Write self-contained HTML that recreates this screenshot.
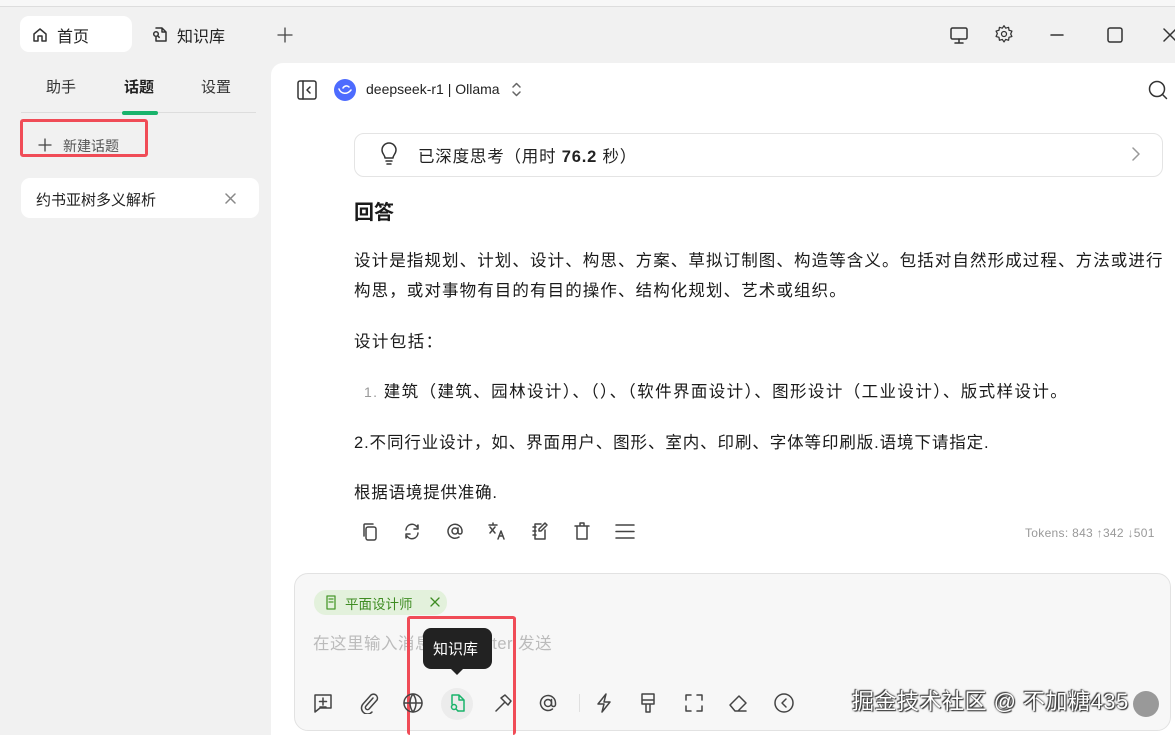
<!DOCTYPE html>
<html><head><meta charset="utf-8"><style>
*{margin:0;padding:0;box-sizing:border-box}
body{width:1175px;height:735px;overflow:hidden;background:#f1f1f1;font-family:"Liberation Sans","Noto Sans CJK SC",sans-serif;color:#222;position:relative}
.abs{position:absolute}
svg{position:absolute;fill:none;stroke:#333;stroke-width:1.5;stroke-linecap:round;stroke-linejoin:round}
.t{font-size:16.5px;letter-spacing:1.4px;color:#1a1a1a;left:354px;white-space:nowrap}
.ic svg{stroke:#444}
</style></head><body>
<div class="abs" style="left:0;top:0;width:1175px;height:7px;background:#f7f7f7;border-bottom:1px solid #ddd"></div>
<div class="abs" style="left:20px;top:16px;width:112px;height:36px;background:#fff;border-radius:9px"></div>
<svg style="left:32px;top:27px" width="16" height="16" viewBox="0 0 16 16"><path d="M2 7L8 2l6 5v7H10V9H6v5H2z"/></svg>
<div class="abs" style="left:57px;top:23px;font-size:16px">首页</div>
<svg style="left:152px;top:26px" width="16" height="17" viewBox="0 0 16 17"><path d="M4 2h6l4 4v9H4V11M10 2v4h4"/><circle cx="4" cy="8" r="2.3"/><path d="M5.7 9.8l1.5 1.5"/></svg>
<div class="abs" style="left:177px;top:23px;font-size:16px">知识库</div>
<svg style="left:277px;top:27px" width="16" height="16" viewBox="0 0 16 16"><path d="M8 1v14M1 8h14" stroke="#444" stroke-width="1.3"/></svg>
<svg style="left:949px;top:26px" width="20" height="19" viewBox="0 0 20 19"><rect x="2" y="2" width="16" height="11" rx="1.5"/><path d="M10 13v4M6 17h8"/></svg>
<svg style="left:994px;top:24px" width="20" height="20" viewBox="0 0 24 24"><circle cx="12" cy="12" r="3"/><path d="M12 2l2 3 3.5-1 .5 3.5 3.5 1-1.5 3.5 1.5 3-3.5 1-.5 3.5-3.5-1-2 3-2-3-3.5 1-.5-3.5-3.5-1 1.5-3.5-1.5-3 3.5-1 .5-3.5 3.5 1z"/></svg>
<svg style="left:1050px;top:34px" width="14" height="2" viewBox="0 0 14 2"><path d="M1 1h12"/></svg>
<svg style="left:1107px;top:27px" width="16" height="16" viewBox="0 0 16 16"><rect x="1" y="1" width="14" height="14" rx="2"/></svg>
<svg style="left:1163px;top:27px" width="14" height="16" viewBox="0 0 14 16"><path d="M1 2l12 12M13 2L1 14"/></svg>
<div class="abs" style="left:46px;top:76px;font-size:15px;color:#333">助手</div>
<div class="abs" style="left:124px;top:76px;font-size:15px;font-weight:bold">话题</div>
<div class="abs" style="left:201px;top:76px;font-size:15px;color:#333">设置</div>
<div class="abs" style="left:21px;top:112px;width:235px;height:1px;background:#ddd"></div>
<div class="abs" style="left:122px;top:111px;width:36px;height:4px;background:#19b36b;border-radius:2px"></div>
<div class="abs" style="left:20px;top:119px;width:128px;height:38px;border:3px solid #f04c57;border-radius:3px"></div>
<svg style="left:38px;top:138px" width="14" height="14" viewBox="0 0 14 14"><path d="M7 1v12M1 7h12" stroke="#444" stroke-width="1.3"/></svg>
<div class="abs" style="left:63px;top:136px;font-size:14px;color:#555">新建话题</div>
<div class="abs" style="left:21px;top:178px;width:238px;height:40px;background:#fff;border-radius:9px"></div>
<div class="abs" style="left:36px;top:189px;font-size:15px">约书亚树多义解析</div>
<svg style="left:225px;top:193px" width="11" height="11" viewBox="0 0 11 11"><path d="M1 1l9 9M10 1l-9 9" stroke="#888"/></svg>
<div class="abs" style="left:271px;top:63px;width:904px;height:672px;background:#fff;border-top-left-radius:12px"></div>
<svg style="left:297px;top:80px" width="20" height="20" viewBox="0 0 20 20"><rect x="1" y="1" width="18" height="18" rx="2"/><path d="M6 1v18M13 7l-3 3 3 3"/></svg>
<div class="abs" style="left:334px;top:79px;width:22px;height:22px;border-radius:50%;background:#4d6bfe"></div>
<svg style="left:338px;top:84px" width="14" height="12" viewBox="0 0 14 12"><path d="M1 5c2 5 8 6 12 1M5 4c1-2 4-3 6-1" stroke="#fff"/></svg>
<div class="abs" style="left:366px;top:81px;font-size:14px">deepseek-r1 | Ollama</div>
<svg style="left:511px;top:82px" width="11" height="15" viewBox="0 0 11 15"><path d="M2 5l3.5-3.5L9 5M2 10l3.5 3.5L9 10" stroke="#666"/></svg>
<svg style="left:1147px;top:79px" width="22" height="22" viewBox="0 0 22 22"><circle cx="10" cy="10" r="7.5"/><path d="M15.5 15.5l4 4"/></svg>
<div class="abs" style="left:354px;top:133px;width:809px;height:44px;border:1px solid #e4e4e4;border-radius:10px"></div>
<svg style="left:380px;top:142px" width="18" height="26" viewBox="0 0 18 26"><path d="M5 16c0-3-3-4-3-8a7 7 0 0114 0c0 4-3 5-3 8zM6 19h6M7 22h4"/></svg>
<div class="abs" style="left:418px;top:143px;font-size:16.5px;letter-spacing:0.8px">已深度思考（用时 <b>76.2</b> 秒）</div>
<svg style="left:1131px;top:147px" width="10" height="14" viewBox="0 0 10 14"><path d="M2 1l6 6-6 6" stroke="#999"/></svg>
<div class="abs t" style="top:196px;font-size:20px;font-weight:bold;letter-spacing:0">回答</div>
<div class="abs t" style="top:246px;line-height:30px;letter-spacing:1.1px">设计是指规划、计划、设计、构思、方案、草拟订制图、构造等含义。包括对自然形成过程、方法或进行<br>构思，或对事物有目的有目的操作、结构化规划、艺术或组织。</div>
<div class="abs t" style="top:328px">设计包括：</div>
<div class="abs t" style="top:378px;left:364px"><span style="color:#999;font-size:14px">1. </span>建筑（建筑、园林设计）、（）、（软件界面设计）、图形设计（工业设计）、版式样设计。</div>
<div class="abs t" style="top:429px;letter-spacing:0.9px">2.不同行业设计，如、界面用户、图形、室内、印刷、字体等印刷版.语境下请指定.</div>
<div class="abs t" style="top:479px;letter-spacing:0.8px">根据语境提供准确.</div>
<div class="ic">
<svg style="left:361px;top:522px" width="18" height="20" viewBox="0 0 18 20"><rect x="5" y="5" width="10" height="13" rx="2"/><path d="M3 14V3a1 1 0 011-1h8"/></svg>
<svg style="left:403px;top:522px" width="18" height="19" viewBox="0 0 18 19"><path d="M3 8a6 6 0 0111-3l1-2v4h-4M15 11a6 6 0 01-11 3l-1 2v-4h4"/></svg>
<svg style="left:445px;top:521px" width="20" height="20" viewBox="0 0 20 20"><circle cx="10" cy="10" r="3"/><path d="M13 7v4a2 2 0 004 0v-1a7 7 0 10-3 6"/></svg>
<svg style="left:487px;top:521px" width="20" height="20" viewBox="0 0 20 20"><path d="M2 4h8M6 2v2M3 6l5 6M8 6l-5 6M11 18l3-8 3 8M12 15h4"/></svg>
<svg style="left:531px;top:521px" width="18" height="20" viewBox="0 0 18 20"><path d="M10 3H4v15h10V9M2 6h3M2 10h3M2 14h3M14 2l2 2-6 6H8V8z"/></svg>
<svg style="left:573px;top:521px" width="18" height="20" viewBox="0 0 18 20"><path d="M2 5h14M7 5V2h4v3M4 5v13h10V5"/></svg>
<svg style="left:614px;top:523px" width="22" height="17" viewBox="0 0 22 17"><path d="M2 2h18M2 8.5h18M2 15h18"/></svg>
</div>
<div class="abs" style="left:1025px;top:526px;font-size:12px;color:#999;letter-spacing:0.3px">Tokens: 843 ↑342 ↓501</div>
<div class="abs" style="left:294px;top:573px;width:877px;height:158px;border:1px solid #e2e2e2;border-radius:14px;background:#f7f7f7"></div>
<div class="abs" style="left:314px;top:590px;width:133px;height:25px;background:#e3f1dc;border-radius:12px"></div>
<svg style="left:324px;top:595px" width="14" height="15" viewBox="0 0 14 15"><path d="M3 1h8v13H3zM5 4h4M5 7h4" stroke="#4a9a2e" stroke-width="1.3"/></svg>
<div class="abs" style="left:345px;top:593px;font-size:13.5px;color:#3e8c22">平面设计师</div>
<svg style="left:430px;top:597px" width="10" height="10" viewBox="0 0 10 10"><path d="M1 1l8 8M9 1L1 9" stroke="#3e8c22" stroke-width="1.3"/></svg>
<div class="abs" style="left:313px;top:630px;font-size:16.5px;color:#bbb;letter-spacing:0.5px">在这里输入消息，按 Enter 发送</div>
<div class="abs" style="left:423px;top:628px;width:69px;height:41px;background:#222;border-radius:8px;color:#fff;font-size:15px;padding:10px 0 0 10px">知识库</div>
<div class="abs" style="left:450px;top:668px;width:0;height:0;border-left:7px solid transparent;border-right:7px solid transparent;border-top:7px solid #222"></div>
<div class="abs" style="left:441px;top:688px;width:32px;height:32px;border-radius:50%;background:#ececec"></div>
<div class="abs" style="left:407px;top:616px;width:109px;height:119px;border:3px solid #f04c57;border-bottom:none;border-radius:3px"></div>
<div class="ic">
<svg style="left:312px;top:692px" width="22" height="22" viewBox="0 0 22 22"><path d="M3 3h16v13H8l-5 4zM11 6v7M7.5 9.5h7M8 15h6"/></svg>
<svg style="left:359px;top:692px" width="20" height="22" viewBox="0 0 20 22"><path d="M14 6l-7 8a2 2 0 003 3l8-9a4 4 0 00-6-5L4 12a6 6 0 009 8"/></svg>
<svg style="left:402px;top:692px" width="22" height="22" viewBox="0 0 22 22"><circle cx="11" cy="11" r="9"/><path d="M2 11h18M11 2c-4 5-4 13 0 18M11 2c4 5 4 13 0 18"/></svg>
<svg style="left:447px;top:692px" width="20" height="22" viewBox="0 0 20 22"><path d="M5 12V3h7l5 5v11H11M12 3v5h5" stroke="#19b36b"/><circle cx="7" cy="15" r="2.5" stroke="#19b36b"/><path d="M9 17l2 2" stroke="#19b36b"/></svg>
<svg style="left:492px;top:692px" width="22" height="22" viewBox="0 0 22 22"><path d="M4 19l9-9M9 6l4-3 6 6-3 4-3-3z"/></svg>
<svg style="left:537px;top:692px" width="22" height="22" viewBox="0 0 22 22"><circle cx="11" cy="11" r="3.5"/><path d="M14.5 7.5v5a2 2 0 004 0V11a7.5 7.5 0 10-3 6"/></svg>
<div class="abs" style="left:579px;top:694px;width:1px;height:18px;background:#e0e0e0"></div>
<svg style="left:594px;top:692px" width="20" height="22" viewBox="0 0 20 22"><path d="M12 2L4 12h6l-2 8 8-10h-6z"/></svg>
<svg style="left:638px;top:692px" width="20" height="22" viewBox="0 0 20 22"><path d="M4 2h12v10H4zM4 8h12M8 12v8h4v-8"/></svg>
<svg style="left:683px;top:692px" width="22" height="22" viewBox="0 0 22 22"><path d="M3 8V3h5M14 3h5v5M19 14v5h-5M8 19H3v-5"/></svg>
<svg style="left:727px;top:692px" width="22" height="22" viewBox="0 0 22 22"><path d="M8 19h11M3 13l9-9 7 7-8 8H8z"/></svg>
<svg style="left:773px;top:692px" width="22" height="22" viewBox="0 0 22 22"><circle cx="11" cy="11" r="9"/><path d="M13 7l-4 4 4 4"/></svg>
</div>
<div class="abs" style="left:1133px;top:691px;width:26px;height:26px;border-radius:50%;background:#999"></div>
<div class="abs" style="left:852px;top:684px;font-size:22px;color:#fff;text-shadow:0 0 2px #333,1px 1px 1px #333,-1px -1px 1px #333;letter-spacing:0.5px">掘金技术社区 @ 不加糖435</div>
</body></html>
